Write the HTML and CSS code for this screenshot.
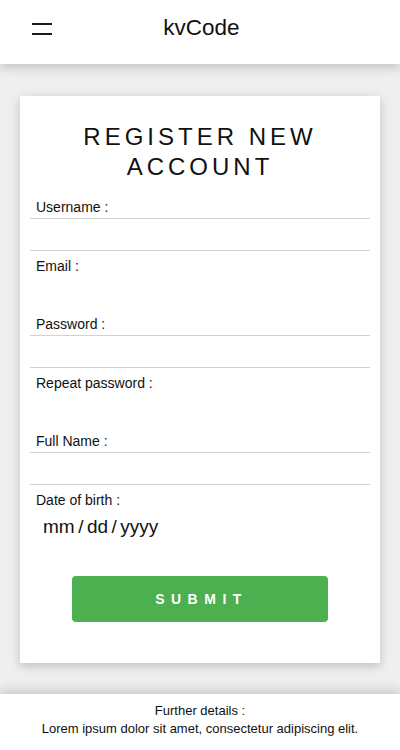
FILE: index.html
```html
<!DOCTYPE html>
<html lang="en">
<head>
<meta charset="utf-8">
<title>kvCode - Register</title>
<link rel="stylesheet" href="styles.css">
</head>
<body>
<header class="topbar">
  <button class="menu-btn" aria-label="Menu">
    <svg width="20" height="12" viewBox="0 0 20 12"><rect x="0" y="0" width="20" height="2" fill="#1a1a1a"/><rect x="0" y="10" width="20" height="2" fill="#1a1a1a"/></svg>
  </button>
  <div class="brand">kvCode</div>
  <div class="spacer"></div>
</header>
<main class="main">
  <section class="card">
    <h1 class="card-title">REGISTER NEW ACCOUNT</h1>
    <form class="form">
      <div class="field">
        <label class="label">Username :</label>
        <input class="input input-lined" type="text">
      </div>
      <div class="field">
        <label class="label">Email :</label>
        <input class="input input-plain" type="email">
      </div>
      <div class="field">
        <label class="label">Password :</label>
        <input class="input input-lined" type="password">
      </div>
      <div class="field">
        <label class="label">Repeat password :</label>
        <input class="input input-plain" type="password">
      </div>
      <div class="field">
        <label class="label">Full Name :</label>
        <input class="input input-lined" type="text">
      </div>
      <div class="field">
        <label class="label">Date of birth :</label>
        <input class="input input-date" type="date">
      </div>
      <div class="actions">
        <button class="submit" type="button">SUBMIT</button>
      </div>
    </form>
  </section>
</main>
<footer class="footer">
  <p class="footer-title">Further details :</p>
  <p class="footer-text">Lorem ipsum dolor sit amet, consectetur adipiscing elit.</p>
</footer>
</body>
</html>
```
FILE: styles.css
```css
* { box-sizing: border-box; }
html, body { margin: 0; padding: 0; }
body {
  background: #efefef;
  font-family: "Liberation Sans", Arial, sans-serif;
  color: #111;
}
.topbar {
  height: 64px;
  background: #fff;
  display: grid;
  grid-template-columns: 1fr auto 1fr;
  align-items: center;
  padding: 0 32px;
  box-shadow: 0 4px 10px rgba(0,0,0,0.18);
  position: relative;
  z-index: 2;
}
.menu-btn {
  background: none;
  border: 0;
  padding: 0;
  width: 20px;
  height: 12px;
  display: block;
  margin-top: -7px;
}
.menu-btn svg { display: block; }
.brand {
  font-size: 22.5px;
  color: #111;
  margin-top: -8px;
  padding-left: 3px;
}
.main {
  padding: 32px 20px 31px;
}
.card {
  background: #fff;
  padding: 26px 10px 41px;
  box-shadow: 0 3px 10px rgba(0,0,0,0.2);
}
.card-title {
  margin: 0 0 17px;
  font-weight: normal;
  font-size: 24px;
  line-height: 30px;
  letter-spacing: 4px;
  text-align: center;
  color: #111;
}
.form { margin: 0; }
.field {
  display: flex;
  flex-direction: column;
  margin-bottom: 6.5px;
}
.label {
  font-size: 14px;
  line-height: 17px;
  padding-left: 6px;
  color: #111;
}
.input {
  display: block;
  width: 100%;
  height: 33px;
  margin-top: 2px;
  font-family: "Liberation Sans", Arial, sans-serif;
  font-size: 16px;
  background: transparent;
  outline: none;
}
.input-lined {
  border: 0;
  border-top: 1px solid #d2d2d2;
  border-bottom: 1px solid #d2d2d2;
}
.input-plain {
  border: 0;
}
.input-date {
  border: 0;
  font-family: "Liberation Sans", Arial, sans-serif;
  font-size: 19px;
  color: #111;
  padding-left: 12px;
}
.input-date::-webkit-calendar-picker-indicator { display: none; }
.input-date::-webkit-datetime-edit-text { padding: 0 2.5px; }
.actions {
  display: flex;
  justify-content: center;
  padding-top: 26px;
}
.submit {
  width: 256px;
  height: 46px;
  background: #4caf50;
  color: #fff;
  border: 0;
  border-radius: 4px;
  font-family: "Liberation Sans", Arial, sans-serif;
  font-weight: bold;
  font-size: 14px;
  letter-spacing: 6.5px;
  padding: 0 0 0 3px;
}
.footer {
  background: #fff;
  padding: 8px 0 20px;
  text-align: center;
  box-shadow: 0 -4px 10px rgba(0,0,0,0.15);
  position: relative;
}
.footer p {
  margin: 0;
  font-size: 13px;
  line-height: 18px;
  color: #111;
}
```
